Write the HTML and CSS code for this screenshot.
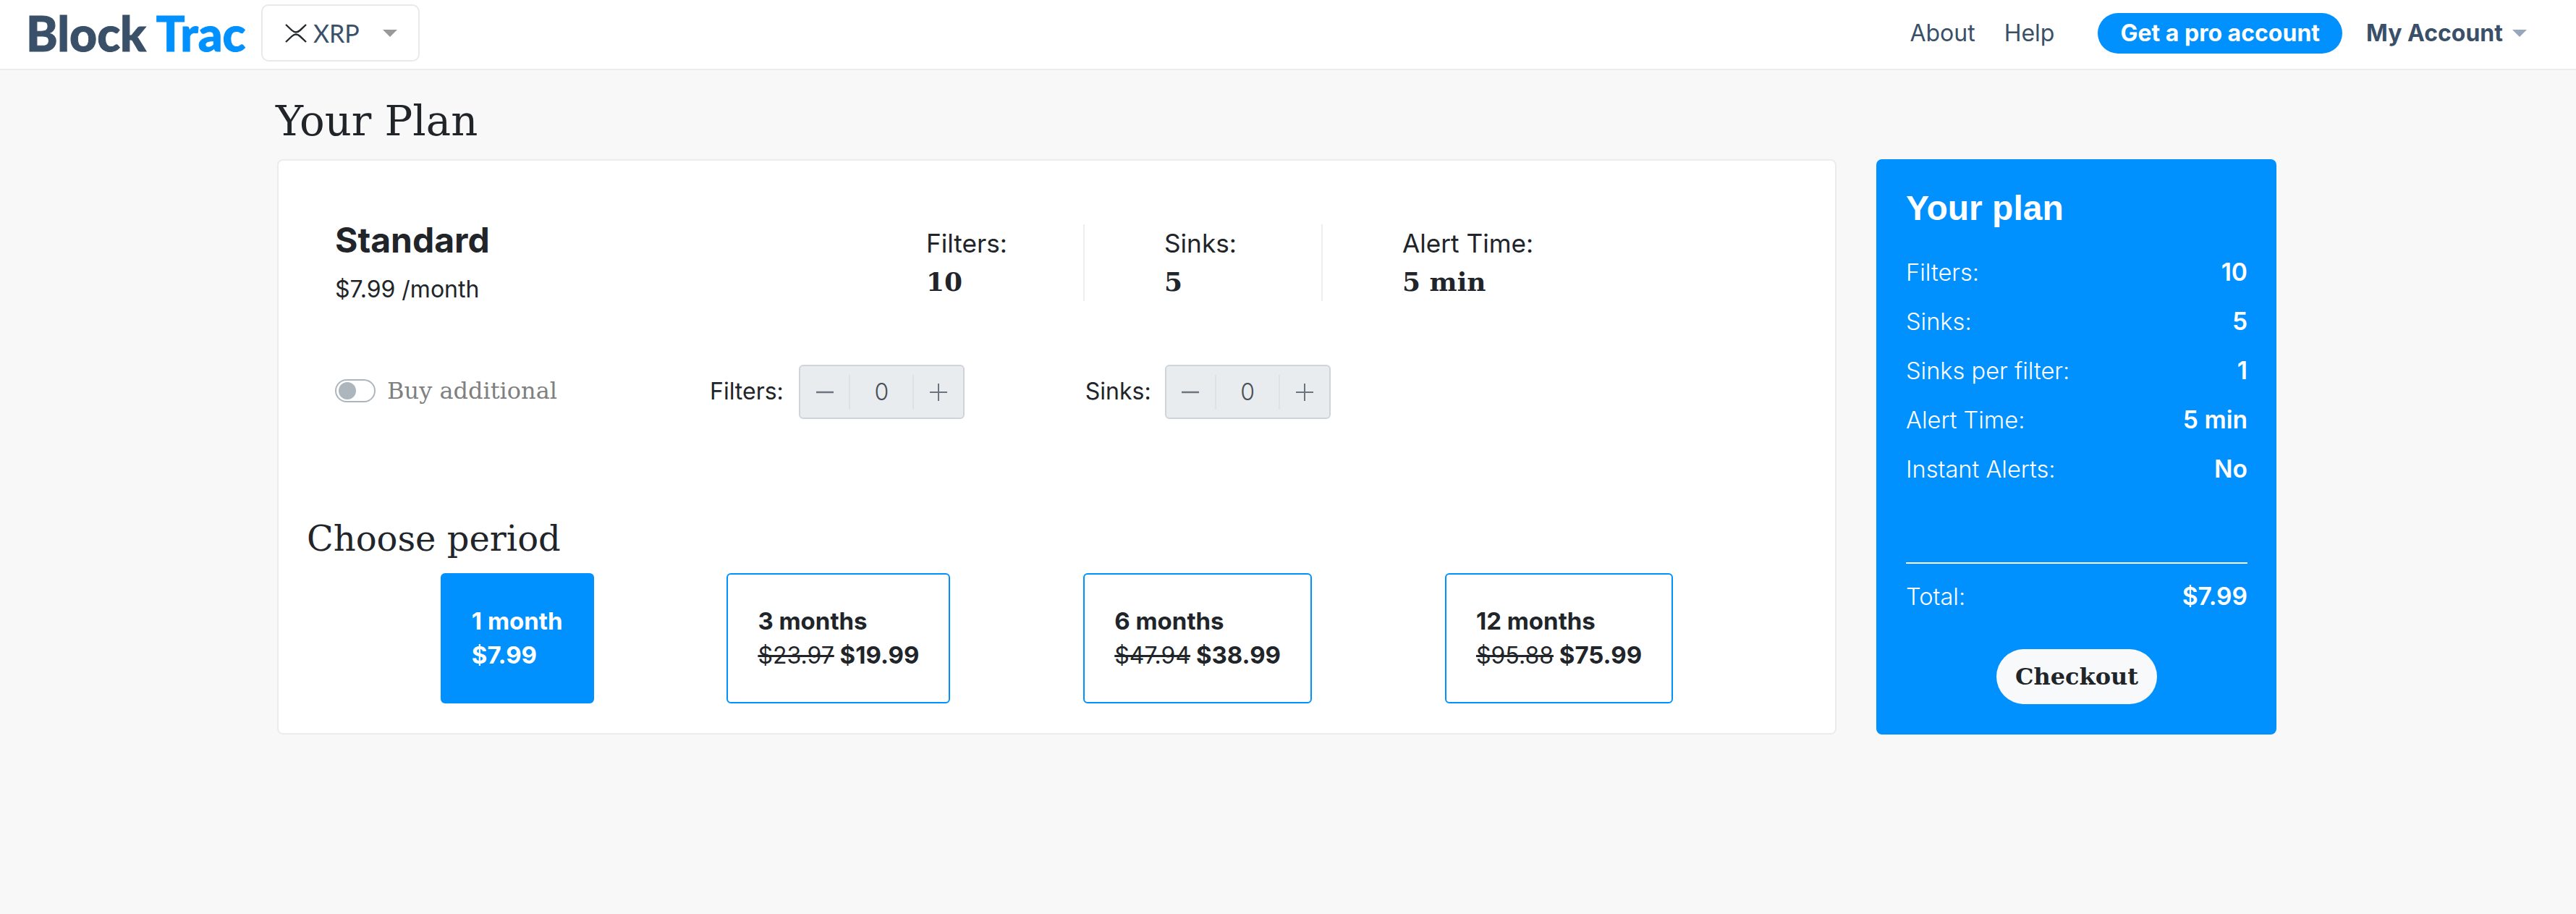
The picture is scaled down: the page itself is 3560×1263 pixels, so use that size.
FILE: index.html
```html
<!DOCTYPE html>
<html lang="en">
<head>
    <meta charset="UTF-8">
    <meta name="viewport" content="width=device-width, initial-scale=1.0">
    <title>Block Trac - Your Plan</title>
    <link rel="stylesheet" href="styles.css">
</head>
<body>
    <header class="topbar">
        <a class="logo">Block <span class="logo-accent">Trac</span></a>
        <div class="coin-select">
            <svg class="coin-icon" width="30" height="26" viewBox="0 0 30 26" fill="none" stroke="#23292f" stroke-width="2.4">
                <path d="M1 1 L9.5 9 Q15 14 20.5 9 L29 1"/>
                <path d="M1 25 L9.5 17 Q15 12 20.5 17 L29 25"/>
            </svg>
            <span class="coin-name">XRP</span>
            <span class="caret caret-coin"></span>
        </div>
        <nav class="nav">
            <a class="nav-link nav-about">About</a>
            <a class="nav-link">Help</a>
            <a class="pro-btn">Get a pro account</a>
            <a class="account">My Account</a>
            <span class="caret caret-account"></span>
        </nav>
    </header>

    <main class="page">
        <h1 class="page-title">Your Plan</h1>
        <div class="columns">
            <section class="plan-card">
                <div class="plan-top">
                    <div class="plan-info">
                        <div class="plan-name">Standard</div>
                        <div class="plan-price">$7.99 /month</div>
                    </div>
                    <div class="stat">
                        <div>Filters:</div>
                        <div class="stat-value">10</div>
                    </div>
                    <div class="stat">
                        <div>Sinks:</div>
                        <div class="stat-value">5</div>
                    </div>
                    <div class="stat stat-last">
                        <div>Alert Time:</div>
                        <div class="stat-value">5 min</div>
                    </div>
                </div>

                <div class="addons">
                    <div class="toggle-group">
                        <span class="toggle"><span class="toggle-knob"></span></span>
                        <span class="toggle-label">Buy additional</span>
                    </div>
                    <span class="addon-label">Filters:</span>
                    <div class="stepper">
                        <span class="step">
                            <svg width="24" height="24" viewBox="0 0 24 24" stroke="#6c757d" stroke-width="2.5"><path d="M0 12H24"/></svg>
                        </span>
                        <span class="step step-value">0</span>
                        <span class="step">
                            <svg width="24" height="24" viewBox="0 0 24 24" stroke="#6c757d" stroke-width="2"><path d="M0 12H24M12 0V24"/></svg>
                        </span>
                    </div>
                    <span class="addon-label addon-label-second">Sinks:</span>
                    <div class="stepper">
                        <span class="step">
                            <svg width="24" height="24" viewBox="0 0 24 24" stroke="#6c757d" stroke-width="2.5"><path d="M0 12H24"/></svg>
                        </span>
                        <span class="step step-value">0</span>
                        <span class="step">
                            <svg width="24" height="24" viewBox="0 0 24 24" stroke="#6c757d" stroke-width="2"><path d="M0 12H24M12 0V24"/></svg>
                        </span>
                    </div>
                </div>

                <h2 class="period-title">Choose period</h2>
                <div class="periods">
                    <div class="period period-active">
                        <div>1 month</div>
                        <div>$7.99</div>
                    </div>
                    <div class="period">
                        <div>3 months</div>
                        <div><s>$23.97</s> $19.99</div>
                    </div>
                    <div class="period">
                        <div>6 months</div>
                        <div><s>$47.94</s> $38.99</div>
                    </div>
                    <div class="period">
                        <div>12 months</div>
                        <div><s>$95.88</s> $75.99</div>
                    </div>
                </div>
            </section>

            <aside class="summary">
                <h3 class="summary-title">Your plan</h3>
                <div class="summary-row"><span>Filters:</span><b>10</b></div>
                <div class="summary-row"><span>Sinks:</span><b>5</b></div>
                <div class="summary-row"><span>Sinks per filter:</span><b>1</b></div>
                <div class="summary-row"><span>Alert Time:</span><b>5 min</b></div>
                <div class="summary-row"><span>Instant Alerts:</span><b>No</b></div>
                <div class="summary-row summary-total"><span>Total:</span><b>$7.99</b></div>
                <a class="checkout">Checkout</a>
            </aside>
        </div>
    </main>
</body>
</html>
```

FILE: styles.css
```css
body {
    margin: 0;
    background-color: #f8f8f8;
    color: #212529;
    font-family: Inter, sans-serif;
    font-size: 32px;
}

/* top bar */
.topbar {
    display: flex;
    align-items: center;
    box-sizing: border-box;
    height: 97px;
    padding: 0 68px 4px 36px;
    background-color: #fff;
    border-bottom: 2px solid #ececec;
}
.logo {
    width: 325px;
    color: #3a5068;
    font-family: Lato, sans-serif;
    font-size: 66px;
    font-weight: 900;
    -webkit-text-stroke: 1px;
    white-space: nowrap;
}
.logo-accent {
    color: #0091ff;
}
.coin-select {
    display: flex;
    align-items: center;
    box-sizing: border-box;
    width: 219px;
    height: 79px;
    padding-left: 31px;
    border: 2px solid #e9e9e9;
    border-radius: 10px;
}
.coin-name {
    margin-left: 9px;
    color: #3a5068;
    font-family: Lato, sans-serif;
    font-size: 34px;
}
.caret {
    width: 0;
    height: 0;
    border-left: 10px solid transparent;
    border-right: 10px solid transparent;
}
.caret-coin {
    margin-left: 32px;
    border-top: 10px solid #999;
}
.caret-account {
    margin-left: 13px;
    border-top: 10px solid #98a6bd;
}
.nav {
    display: flex;
    align-items: center;
    margin-left: auto;
    color: #3a5068;
}
.nav-link {
    margin-right: 42px;
}
.nav-about {
    margin-right: 40px;
}
.pro-btn {
    display: flex;
    align-items: center;
    box-sizing: border-box;
    height: 56px;
    margin: 0 33px 0 18px;
    padding: 0 31px;
    background-color: #0091ff;
    border-radius: 28px;
    color: #fff;
    font-weight: 700;
}
.account {
    font-weight: 650;
}

/* page */
.page {
    padding-left: 381px;
}
.page-title {
    margin: 29px 0 10px;
    font-family: "DejaVu Serif", serif;
    font-size: 57.6px;
    font-weight: 400;
    line-height: 84px;
}
.columns {
    display: flex;
    align-items: stretch;
    gap: 55px;
    margin-left: 2px;
}

/* plan card */
.plan-card {
    box-sizing: border-box;
    width: 2155px;
    height: 795px;
    background-color: #fff;
    border: 2px solid #ececec;
    border-radius: 8px;
}
.plan-top {
    display: flex;
    height: 106px;
    margin-top: 88px;
    padding-left: 78px;
}
.plan-info {
    width: 707px;
}
.plan-name {
    margin-top: -2px;
    font-size: 48px;
    font-weight: 700;
    line-height: 48px;
}
.plan-price {
    margin-top: 20px;
    line-height: 48px;
}
.stat {
    box-sizing: border-box;
    width: 329px;
    padding-left: 110px;
    border-right: 2px solid #eee;
    font-size: 35.2px;
    line-height: 53px;
}
.stat:first-of-type {
    width: 327px;
}
.stat-last {
    border-right: none;
}
.stat-value {
    font-family: "DejaVu Serif", serif;
    font-size: 36px;
    font-weight: 700;
}

.addons {
    display: flex;
    align-items: center;
    height: 75px;
    margin-top: 88px;
    padding-left: 78px;
}
.toggle-group {
    display: flex;
    align-items: center;
    width: 518px;
    padding-bottom: 3px;
}
.toggle {
    display: flex;
    align-items: center;
    box-sizing: border-box;
    width: 56px;
    height: 32px;
    padding-left: 3px;
    border: 2px solid #adb5bd;
    border-radius: 16px;
}
.toggle-knob {
    width: 24px;
    height: 24px;
    background-color: #adb5bd;
    border-radius: 50%;
}
.toggle-label {
    margin-left: 16px;
    color: #808080;
    font-family: "DejaVu Serif", serif;
}
.addon-label {
    margin-right: 21px;
    padding-bottom: 3px;
}
.addon-label-second {
    margin: 0 19px 0 167px;
}
.stepper {
    display: grid;
    grid-template-columns: 67.5px 90px 67.5px;
    align-items: center;
    height: 75px;
    background-color: #e9ecef;
    border: 2px solid #ced4da;
    border-radius: 6px;
    box-sizing: border-box;
}
.step {
    display: flex;
    justify-content: center;
    align-items: center;
    height: 48px;
}
.step-value {
    border-left: 2px solid #dee2e6;
    border-right: 2px solid #dee2e6;
    color: #495057;
    font-weight: 300;
}

.period-title {
    margin: 135px 0 0 39px;
    font-family: "DejaVu Serif", serif;
    font-size: 48px;
    font-weight: 400;
    line-height: 60px;
}
.periods {
    display: flex;
    justify-content: space-evenly;
    margin: 18px 40px 0 40px;
}
.period {
    box-sizing: border-box;
    height: 180px;
    padding: 41px;
    border: 2px solid #0091ff;
    border-radius: 6px;
    font-size: 33px;
    font-weight: 700;
    line-height: 47px;
    white-space: nowrap;
}
.period s {
    font-size: 32px;
    font-weight: 400;
}
.period-active {
    background-color: #0091ff;
    color: #fff;
}

/* right panel */
.summary {
    box-sizing: border-box;
    display: flex;
    flex-direction: column;
    width: 553px;
    height: 795px;
    padding: 0 40px 0 41px;
    background-color: #0091ff;
    border-radius: 8px;
    color: #fff;
}
.summary-title {
    margin: 38px 0 24px;
    font-family: "Liberation Sans", sans-serif;
    font-size: 48px;
    font-weight: 700;
    line-height: 60px;
}
.summary-row {
    display: flex;
    justify-content: space-between;
    height: 68px;
    font-size: 32.6px;
    font-weight: 300;
    line-height: 68px;
}
.summary-row b {
    font-size: 33.6px;
    font-weight: 600;
}
.summary-total {
    margin-top: 95px;
    padding-top: 11px;
    border-top: 2px solid #fff;
}
.checkout {
    align-self: center;
    box-sizing: border-box;
    width: 222px;
    height: 76px;
    margin-top: 39px;
    background-color: #f8f9fa;
    border-radius: 38px;
    color: #212529;
    font-family: "DejaVu Serif", serif;
    font-weight: 700;
    line-height: 76px;
    text-align: center;
}
```
